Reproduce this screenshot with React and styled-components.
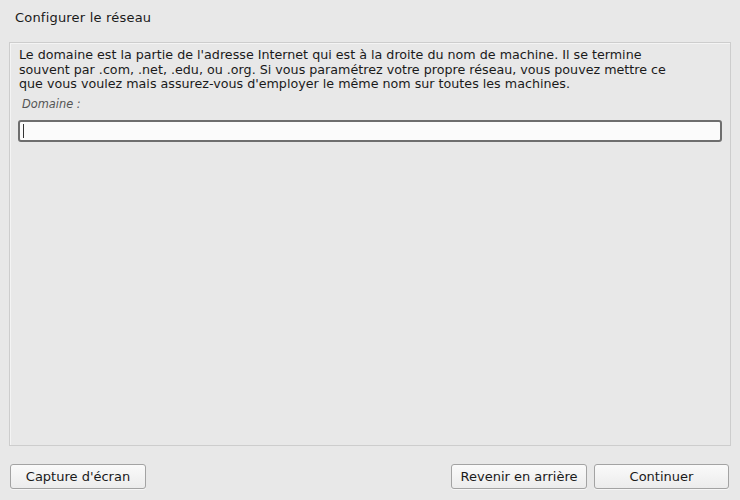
import React from 'react'
import styled, { createGlobalStyle } from 'styled-components'

const Global = createGlobalStyle`
  html, body {
    margin: 0;
    padding: 0;
    background: #e8e8e8;
  }
  body {
    font-family: "DejaVu Sans", sans-serif;
    font-size: 12px;
    color: #1a1a1a;
  }
`;

const Window = styled.div`
  width: 740px;
  height: 500px;
  box-sizing: border-box;
  display: flex;
  flex-direction: column;
  padding: 9px 9px 0 9px;
`;

const Title = styled.div`
  font-size: 13px;
  letter-spacing: 0.2px;
  padding: 1px 0 0 6px;
  height: 32px;
`;

const Panel = styled.div`
  height: 404px;
  box-sizing: border-box;
  border: 1px solid #cdcdcd;
  box-shadow: inset 1px 1px 0 #f4f4f4;
  padding: 5px 8px 0 8px;
`;

const Description = styled.p`
  margin: 0;
  font-size: 12.7px;
  line-height: 14.5px;
  padding-left: 1px;
`;

const Label = styled.div`
  font-style: italic;
  font-size: 11.4px;
  color: #555;
  margin: 5px 0 0 4px;
  height: 23px;
`;

const Input = styled.div`
  height: 22px;
  box-sizing: border-box;
  border: 2px solid #6e6e6e;
  border-radius: 3px;
  background: #fbfbfb;
  display: flex;
  align-items: center;
  padding-left: 3px;
`;

const Caret = styled.span`
  width: 1px;
  height: 14px;
  background: #333;
`;

const Footer = styled.div`
  display: flex;
  align-items: center;
  padding: 18px 2px 0 1px;
`;

const Spacer = styled.div`
  flex: 1;
`;

const Button = styled.button`
  width: ${p => p.$w || 135}px;
  height: 25px;
  margin-left: ${p => p.$ml || 0}px;
  font-family: "DejaVu Sans", sans-serif;
  font-size: 13px;
  color: #1a1a1a;
  border: 1px solid #a3a3a3;
  border-radius: 3px;
  background: linear-gradient(#fafafa, #ececec);
  box-shadow: 0 1px 0 #f6f6f6;
  padding: 0;
`;

export default function App() {
  return (
    <>
      <Global />
      <Window>
        <Title>Configurer le réseau</Title>
        <Panel>
          <Description>
            Le domaine est la partie de l'adresse Internet qui est à la droite du nom de machine. Il se termine
            <br />
            souvent par .com, .net, .edu, ou .org. Si vous paramétrez votre propre réseau, vous pouvez mettre ce
            <br />
            que vous voulez mais assurez-vous d'employer le même nom sur toutes les machines.
          </Description>
          <Label>Domaine :</Label>
          <Input>
            <Caret />
          </Input>
        </Panel>
        <Footer>
          <Button $w={136}>Capture d'écran</Button>
          <Spacer />
          <Button $w={136}>Revenir en arrière</Button>
          <Button $w={135} $ml={7}>Continuer</Button>
        </Footer>
      </Window>
    </>
  );
}
